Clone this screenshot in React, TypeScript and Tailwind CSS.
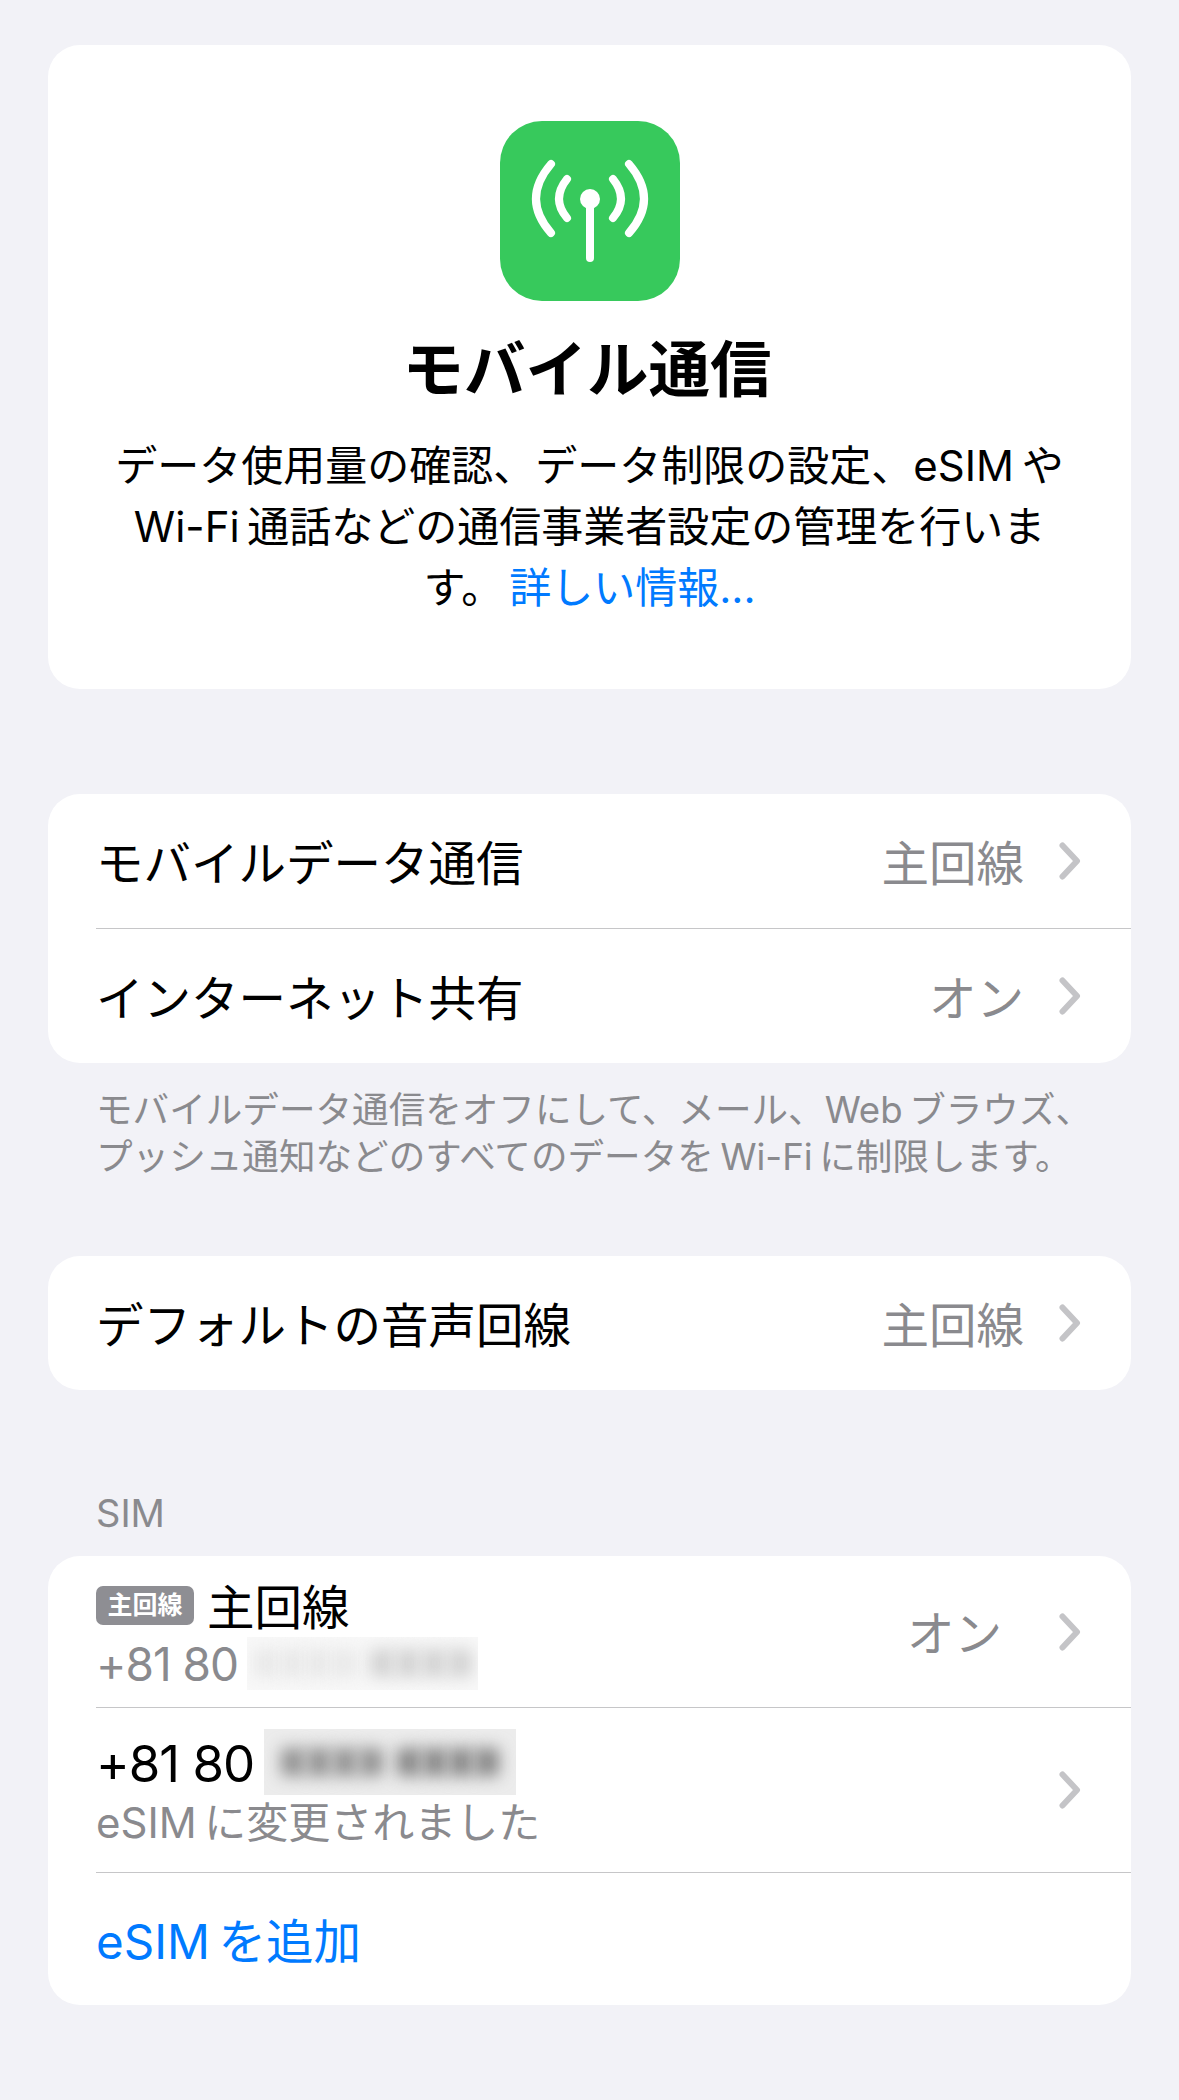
function Chevron() {
  return (
    <svg width="22" height="38" viewBox="0 0 22 38" fill="none" className="shrink-0">
      <path d="M3.5 3.5 L18 19 L3.5 34.5" stroke="#c4c4c7" strokeWidth="6" strokeLinecap="round" strokeLinejoin="round" />
    </svg>
  );
}

function AppIcon() {
  return (
    <div className="w-[180px] h-[180px] rounded-[42px] bg-[#37c95c] flex items-center justify-center">
      <svg width="180" height="180" viewBox="0 0 180 180" fill="none" stroke="#fff" strokeWidth="8" strokeLinecap="round">
        <path d="M51 43 Q21 78 51 112" />
        <path d="M67 58 Q51 78 67 97" />
        <path d="M129 43 Q159 78 129 112" />
        <path d="M113 58 Q129 78 113 97" />
        <path d="M90 78 V137" />
        <circle cx="90" cy="78" r="10" fill="#fff" stroke="none" />
      </svg>
    </div>
  );
}

function Blurred({ boxClass, leftClass, rightClass }: { boxClass: string; leftClass: string; rightClass: string }) {
  const blobs = [0, 1, 2, 3, 4, 5, 6, 7];
  return (
    <div className={`${boxClass} overflow-hidden flex items-center justify-center gap-[2px] shrink-0`}>
      {blobs.map(i => (
        <div
          key={i}
          className={`w-[24px] h-[28px] blur-[8px] ${i < 4 ? leftClass : rightClass} ${i === 3 ? 'mr-[12px]' : ''}`}
        />
      ))}
    </div>
  );
}

function Row({ label, value }: { label: string; value: string }) {
  return (
    <div className="h-[134px] pl-12 pr-[50px] flex items-center justify-between">
      <span className="text-[47.5px] leading-none text-black mt-[5px]">{label}</span>
      <div className="flex items-center gap-[35px]">
        <span className="text-[47.5px] leading-none text-[#8a8a8e] mt-[5px]">{value}</span>
        <Chevron />
      </div>
    </div>
  );
}

export default function App() {
  return (
    <div
      className="w-[1179px] h-[2100px] bg-[#f2f2f7] px-12 pt-[45px] overflow-hidden"
      style={{ fontFamily: 'Inter, "Noto Sans CJK JP", sans-serif' }}
    >
      {/* Header */}
      <div className="h-[644px] bg-white rounded-[32px] flex flex-col items-center pt-[76px]">
        <AppIcon />
        <h1 className="mt-[32px] mr-[5px] text-[61.5px] leading-[74px] font-bold text-black">モバイル通信</h1>
        <p className="mt-[28px] w-[1000px] text-center text-[42px] leading-[61px] text-black">
          データ使用量の確認、データ制限の設定、eSIM&#8201;や<br />
          Wi-Fi&#8201;通話などの通信事業者設定の管理を行いま<br />
          す。<span className="ml-[6px] text-[#007aff]">詳しい情報...</span>
        </p>
      </div>

      {/* Mobile data */}
      <div className="mt-[105px] bg-white rounded-[32px]">
        <Row label="モバイルデータ通信" value="主回線" />
        <div className="ml-12 h-px bg-[#c6c6c8]" />
        <Row label="インターネット共有" value="オン" />
      </div>
      <p className="mt-[24px] px-12 text-[36.6px] leading-[47px] text-[#8a8a8e] whitespace-nowrap">
        モバイルデータ通信をオフにして、メール、Web&#8201;ブラウズ、<br />
        プッシュ通知などのすべてのデータを&#8201;Wi-Fi&#8201;に制限します。
      </p>

      {/* Default voice line */}
      <div className="mt-[75px] bg-white rounded-[32px]">
        <Row label="デフォルトの音声回線" value="主回線" />
      </div>

      {/* SIM */}
      <div className="mt-[100px] px-12 text-[38px] leading-[46px] text-[#8a8a8e]">SIM</div>
      <div className="mt-[20px] bg-white rounded-[32px]">
        <div className="h-[151px] pl-12 pr-[50px] flex items-start justify-between">
          <div className="flex flex-col pt-[19px]">
            <div className="flex items-center h-[60px]">
              <span className="w-[98px] h-[39px] rounded-[7px] bg-[#8e8e93] text-white text-[25px] font-semibold leading-[39px] text-center">主回線</span>
              <span className="ml-[13px] mt-[5px] text-[47.5px] leading-none text-black">主回線</span>
            </div>
            <div className="flex items-center h-[56px]">
              <span className="mt-[2px] text-[46px] leading-none text-[#8a8a8e] tracking-[-1px]">+81 80</span>
              <div className="ml-[9px]">
                <Blurred boxClass="w-[231px] h-[53px] bg-[#f8f8f8]" leftClass="bg-[#e8e8e8]" rightClass="bg-[#d2d2d2]" />
              </div>
            </div>
          </div>
          <div className="h-full flex items-center gap-[57px]">
            <span className="mt-[5px] text-[47.5px] leading-none text-[#8a8a8e]">オン</span>
            <Chevron />
          </div>
        </div>
        <div className="ml-12 h-px bg-[#c6c6c8]" />
        <div className="h-[164px] pl-12 pr-[50px] flex items-start justify-between">
          <div className="flex flex-col pt-[21px]">
            <div className="flex items-center h-[66px]">
              <span className="mt-[2px] text-[51px] leading-none text-black tracking-[-1px]">+81 80</span>
              <div className="ml-[10px]">
                <Blurred boxClass="w-[252px] h-[66px] bg-[#ececec]" leftClass="bg-[#929292]" rightClass="bg-[#868686]" />
              </div>
            </div>
            <span className="mt-[3px] text-[42px] leading-[50px] text-[#8a8a8e]">eSIM&#8201;に変更されました</span>
          </div>
          <div className="h-full flex items-center">
            <Chevron />
          </div>
        </div>
        <div className="ml-12 h-px bg-[#c6c6c8]" />
        <div className="h-[132px] pl-12 flex items-center">
          <span className="mt-[5px] text-[47.5px] leading-none text-[#007aff]">eSIM&#8201;を追加</span>
        </div>
      </div>
    </div>
  );
}
